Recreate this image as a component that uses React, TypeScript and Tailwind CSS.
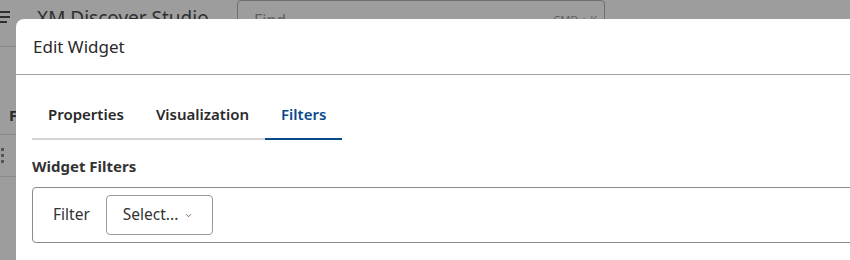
import React from 'react'

const font = { fontFamily: '"Noto Sans", "Open Sans", sans-serif' }

function Tab({ label, active }: { label: string; active?: boolean }) {
  return (
    <div
      className={
        'px-4 pt-[8px] pb-[12px] text-[15px] leading-[24px] font-semibold border-b-2 ' +
        (active ? 'border-[#0a4a8c] text-[#0a4a8c]' : 'border-[#d4d4d4] text-[#2a2a2a]')
      }
    >
      {label}
    </div>
  )
}

export default function App() {
  return (
    <div className="relative w-[850px] h-[260px] overflow-hidden bg-[#9d9d9d]" style={font}>
      {/* page behind the overlay */}
      <div className="flex items-center h-[47px] border-b border-[#8b8b8b]">
        <div className="flex flex-col gap-[3px] w-[10px] -mt-[12px]">
          <span className="h-[2px] bg-[#2e2e2e]" />
          <span className="h-[2px] bg-[#2e2e2e]" />
          <span className="h-[2px] bg-[#2e2e2e] w-[7px]" />
        </div>
        <div className="ml-[27px] w-[200px] -mt-[10px] text-[19px] text-[#2f2f2f] whitespace-nowrap">XM Discover Studio</div>
        <div className="self-start w-[368px] h-[40px] border border-[#6e6e6e] rounded-[4px] flex items-center justify-between pl-4 pr-[7px] text-[#5f5f5f]">
          <span className="text-[16px]">Find</span>
          <span className="text-[11px]">CMD + K</span>
        </div>
      </div>
      <div className="w-[16px]">
        <div className="h-[87px] flex items-end pb-[8px]">
          <span className="ml-[9px] text-[15px] font-bold text-[#2a2a2a]">F</span>
        </div>
        <div className="h-[43px] border-t border-b border-[#8b8b8b] flex flex-col gap-[3px] pt-[13px] pl-[1px]">
          <span className="w-[3px] h-[3px] bg-[#555]" />
          <span className="w-[3px] h-[3px] bg-[#555]" />
          <span className="w-[3px] h-[3px] bg-[#555]" />
        </div>
      </div>

      {/* modal */}
      <div className="absolute left-[16px] top-[19px] right-[-20px] bottom-[-20px] bg-white rounded-tl-[8px] text-[#2a2a2a]">
        <div className="h-[56px] flex items-center px-[17px] border-b border-[#a3a3a3]">
          <span className="text-[17px]">Edit Widget</span>
        </div>
        <div className="flex ml-[16px] mt-[19px]">
          <Tab label="Properties" />
          <Tab label="Visualization" />
          <Tab label="Filters" active />
        </div>
        <div className="ml-[16px] mt-[14px] text-[15px] leading-[24px] font-bold text-[#333]">Widget Filters</div>
        <div className="ml-[16px] mt-[9px] h-[56px] border border-[#8c8c8c] rounded-[4px] flex items-center pl-[20px] gap-[16px]">
          <span className="text-[15.5px] text-[#333]">Filter</span>
          <div className="w-[107px] h-[40px] border border-[#9a9a9a] rounded-[4px] flex items-center pl-[16px] gap-[7px] text-[15.5px] text-[#333]">
            <span>Select...</span>
            <svg width="7" height="5" viewBox="0 0 7 5" fill="none" stroke="#666" strokeWidth="1">
              <path d="M1 1.2 3.5 3.7 6 1.2" />
            </svg>
          </div>
        </div>
      </div>
    </div>
  )
}
